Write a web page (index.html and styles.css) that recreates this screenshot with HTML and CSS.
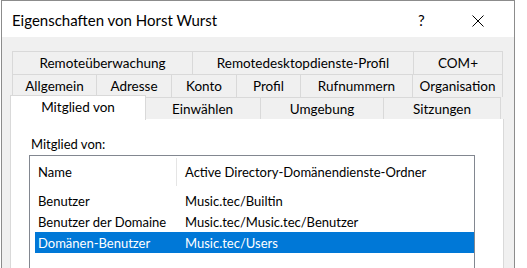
FILE: index.html
```html
<!DOCTYPE html>
<html lang="de">
<head>
<meta charset="utf-8">
<title>Eigenschaften von Horst Wurst</title>
<link rel="stylesheet" href="styles.css">
</head>
<body>
<div class="window">
  <div class="titlebar">
    <div class="title">Eigenschaften von Horst Wurst</div>
    <div class="help">?</div>
    <div class="close">
      <svg width="12" height="12" viewBox="0 0 12 12"><path d="M0.5 0.5 L11.5 11.5 M11.5 0.5 L0.5 11.5" stroke="#000" stroke-width="1" fill="none"/></svg>
    </div>
  </div>
  <div class="content">
    <div class="tabs">
      <div class="tabrow">
        <div class="tab w-remote">Remoteüberwachung</div>
        <div class="tab w-rdp">Remotedesktopdienste-Profil</div>
        <div class="tab w-com">COM+</div>
      </div>
      <div class="tabrow">
        <div class="tab w-allg">Allgemein</div>
        <div class="tab w-adr">Adresse</div>
        <div class="tab w-konto">Konto</div>
        <div class="tab w-prof">Profil</div>
        <div class="tab w-ruf">Rufnummern</div>
        <div class="tab w-org">Organisation</div>
      </div>
      <div class="tabrow last">
        <div class="tab selected w-mit">Mitglied von</div>
        <div class="tab w-einw">Einwählen</div>
        <div class="tab w-umg">Umgebung</div>
        <div class="tab w-sitz">Sitzungen</div>
      </div>
    </div>
    <div class="page">
      <div class="label">Mitglied von:</div>
      <div class="list">
        <div class="lhead">
          <div class="c1">Name</div>
          <div class="c2 sep">Active Directory-Domänendienste-Ordner</div>
        </div>
        <div class="lrow"><div class="c1">Benutzer</div><div class="c2">Music.tec/Builtin</div></div>
        <div class="lrow"><div class="c1">Benutzer der Domaine</div><div class="c2">Music.tec/Music.tec/Benutzer</div></div>
        <div class="lrow sel"><div class="c1">Domänen-Benutzer</div><div class="c2">Music.tec/Users</div></div>
      </div>
    </div>
  </div>
</div>
</body>
</html>
```
FILE: styles.css
```css
html, body {
  margin: 0;
  padding: 0;
  background: #ffffff;
  overflow: hidden;
}
body {
  font-family: Lato, "Noto Sans", sans-serif;
  font-size: 13px;
  color: #000;
}
.window {
  margin-left: 1px;
  width: 512px;
  height: 300px;
  border: 1px solid #8c8c8c;
  border-bottom: none;
  display: flex;
  flex-direction: column;
}
.titlebar {
  height: 36px;
  flex-shrink: 0;
  background: #fff;
  display: flex;
  align-items: center;
}
.title {
  flex: 1;
  padding-left: 10px;
  font-size: 15px;
  padding-top: 2px;
  white-space: nowrap;
}
.help {
  width: 14px;
  font-size: 15px;
  margin-right: 40px;
  padding-top: 2px;
}
.close {
  width: 12px;
  height: 12px;
  margin-right: 30px;
  margin-top: 4px;
  display: flex;
}
.content {
  flex: 1;
  background: #f0f0f0;
  padding: 14px 10px 0 8px;
  display: flex;
  flex-direction: column;
}
.tabs {
  display: flex;
  flex-direction: column;
  padding-left: 2px;
  flex-shrink: 0;
  font-size: 13.5px;
}
.tabrow {
  display: flex;
  height: 23px;
  flex-shrink: 0;
}
.tabrow.last {
  height: 22px;
  position: relative;
}
.tab {
  box-sizing: border-box;
  border: 1px solid #d9d9d9;
  border-right: none;
  border-bottom: none;
  background: #f0f0f0;
  display: flex;
  align-items: center;
  justify-content: center;
  white-space: nowrap;
}
.tab:last-child {
  border-right: 1px solid #d9d9d9;
}
.tab.selected {
  background: #fff;
  border: 1px solid #d9d9d9;
  border-bottom: none;
  margin-left: -2px;
  margin-right: -2px;
  margin-top: -2px;
  height: 25px;
  position: relative;
  z-index: 1;
  padding-bottom: 2px;
}
.w-remote { width: 180px; }
.w-rdp { width: 221px; }
.w-com { width: 90px; }
.w-allg { width: 84px; }
.w-adr { width: 75px; }
.w-konto { width: 65px; }
.w-prof { width: 64px; }
.w-ruf { width: 112px; }
.w-org { width: 91px; }
.w-mit { width: 136px; }
.w-einw { width: 116px; }
.w-umg { width: 123px; }
.w-sitz { width: 118px; }
.page {
  background: #fff;
  border: 1px solid #d9d9d9;
  border-top: none;
  height: 200px;
  padding: 15px 0 0 18px;
}
.label {
  padding-left: 2px;
  height: 21px;
  line-height: 20px;
}
.list {
  width: 444px;
  height: 120px;
  border: 1px solid #828790;
  padding-top: 2px;
}
.lhead {
  display: flex;
  height: 28px;
  align-items: center;
  margin-bottom: 4px;
}
.lrow {
  display: flex;
  height: 21px;
  align-items: center;
  margin-left: 5px;
}
.c1, .c2 { white-space: nowrap; }
.lhead .c1 { width: 146px; padding-left: 8px; box-sizing: border-box; }
.lhead .c2 { padding-left: 8px; height: 100%; display: flex; align-items: center; }
.sep { border-left: 1px solid #e5e5e5; }
.lrow .c1 { width: 150px; padding-left: 3px; box-sizing: border-box; }
.lrow .c2 { padding-left: 0; }
.lrow.sel {
  background: #0078d7;
  color: #fff;
}
```
